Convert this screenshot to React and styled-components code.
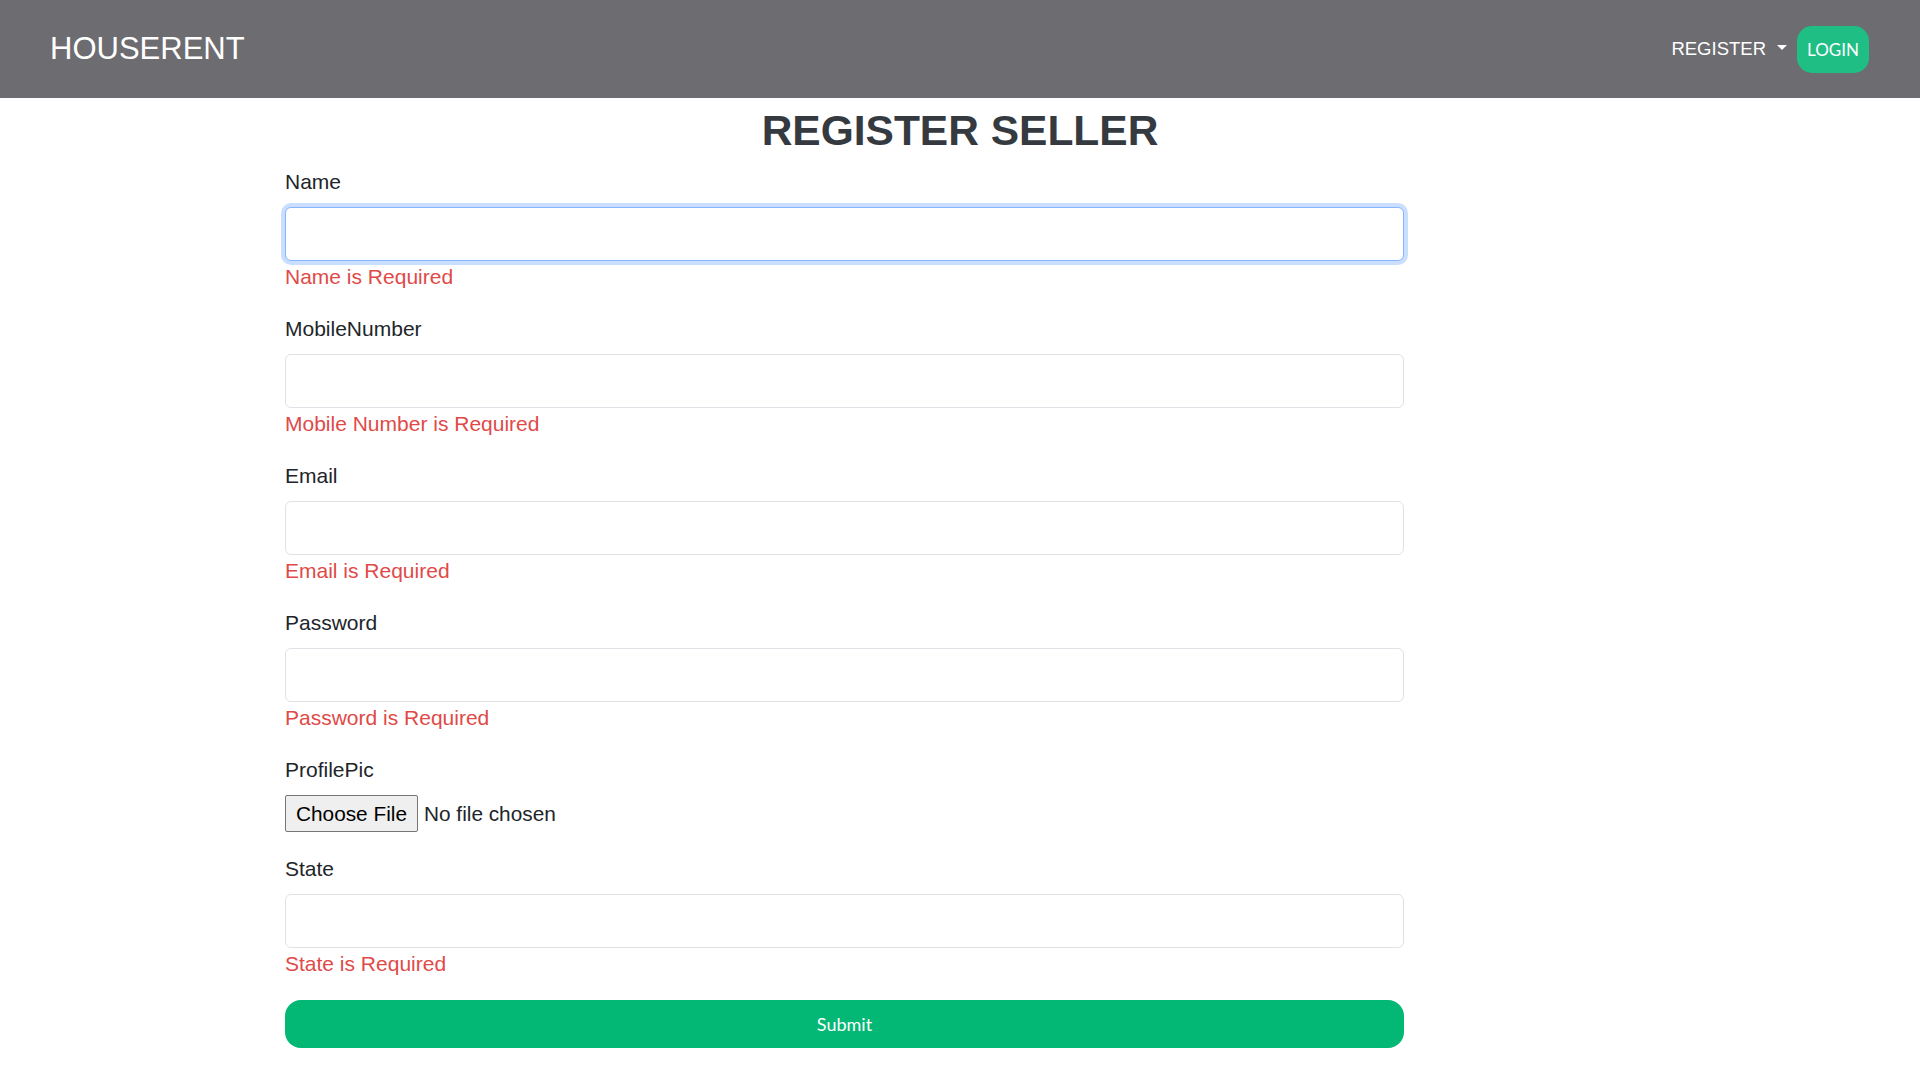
import styled, {createGlobalStyle} from "styled-components";

const GlobalStyle = createGlobalStyle`
  * {
    box-sizing: border-box;
  }
  body {
    margin: 0;
    background: #ffffff;
    font-family: "Liberation Sans", Arial, sans-serif;
    color: #212529;
  }
`

const colors = {
    nav: '#6d6c71',
    white: '#ffffff',
    dark: '#343a40',
    text: '#212529',
    red: '#df4a48',
    green: '#03b875',
    loginGreen: '#1ebe85',
    border: '#dee2e6',
}

const NavBar = styled.nav`
  height: 98px;
  background-color: ${colors.nav};
  display: flex;
  align-items: center;
  justify-content: space-between;
  padding: 0 51px 0 50px;
`
const Brand = styled.a`
  color: ${colors.white};
  font-size: 31px;
  line-height: 1;
  text-decoration: none;
  padding-bottom: 2px;
`
const NavRight = styled.div`
  display: flex;
  align-items: center;
  gap: 10px;
`
const DropdownToggle = styled.a`
  color: ${colors.white};
  font-size: 18.5px;
  display: flex;
  align-items: center;
  cursor: pointer;

  &::after {
    content: "";
    margin-left: 11px;
    border-top: 5px solid ${colors.white};
    border-left: 5px solid transparent;
    border-right: 5px solid transparent;
    margin-top: -3px;
  }
`
const LoginBtn = styled.button`
  width: 72px;
  height: 47px;
  border: none;
  border-radius: 15px;
  background-color: ${colors.loginGreen};
  color: ${colors.white};
  font-family: Lato, "Open Sans", sans-serif;
  font-size: 17px;
  cursor: pointer;
`

const Title = styled.h1`
  margin: 7px 0 10px;
  text-align: center;
  font-size: 42.5px;
  line-height: 1.2;
  font-weight: 700;
  color: ${colors.dark};
`

const Form = styled.form`
  width: 1119px;
  margin-left: 285px;
  display: flex;
  flex-direction: column;
  gap: 21px;
`
const Field = styled.div`
  display: flex;
  flex-direction: column;
`
const Label = styled.label`
  font-size: 21px;
  line-height: 31px;
  margin-bottom: 10px;
  color: ${colors.text};
`
const Input = styled.input`
  height: 54px;
  width: 100%;
  padding: 0 16px;
  font-size: 20px;
  font-family: inherit;
  border: 1px solid ${({$focused}) => $focused ? '#86b7fe' : colors.border};
  border-radius: 6px;
  outline: none;
  box-shadow: ${({$focused}) => $focused ? '0 0 0 4px rgba(13, 110, 253, 0.22)' : 'none'};
`
const Error = styled.div`
  font-size: 21px;
  line-height: 31px;
  color: ${colors.red};
`
const FileInput = styled.input`
  font-family: inherit;
  font-size: 20.8px;
  color: ${colors.text};
  height: 37px;

  &::file-selector-button {
    height: 37px;
    width: 133px;
    padding: 0;
    margin-right: 6px;
    font-family: inherit;
    font-size: 20.8px;
    color: #000000;
    background-color: #efefef;
    border: 1px solid #767676;
    border-radius: 2px;
  }
`
const SubmitBtn = styled.button`
  height: 48px;
  width: 100%;
  border: none;
  border-radius: 16px;
  background-color: ${colors.green};
  color: ${colors.white};
  font-family: Lato, "Open Sans", sans-serif;
  font-size: 18px;
  cursor: pointer;
`

const fields = [
    {label: 'Name', name: 'name', error: 'Name is Required', focused: true},
    {label: 'MobileNumber', name: 'mobile', error: 'Mobile Number is Required'},
    {label: 'Email', name: 'email', error: 'Email is Required'},
    {label: 'Password', name: 'password', error: 'Password is Required', type: 'password'},
]

const App = () => {
    return (
        <>
            <GlobalStyle/>
            <NavBar>
                <Brand>HOUSERENT</Brand>
                <NavRight>
                    <DropdownToggle>REGISTER</DropdownToggle>
                    <LoginBtn>LOGIN</LoginBtn>
                </NavRight>
            </NavBar>
            <Title>REGISTER SELLER</Title>
            <Form onSubmit={e => e.preventDefault()}>
                {fields.map(field => (
                    <Field key={field.name}>
                        <Label htmlFor={field.name}>{field.label}</Label>
                        <Input id={field.name} type={field.type || 'text'} $focused={field.focused}/>
                        <Error>{field.error}</Error>
                    </Field>
                ))}
                <Field>
                    <Label htmlFor="profilePic">ProfilePic</Label>
                    <FileInput id="profilePic" type="file"/>
                </Field>
                <Field>
                    <Label htmlFor="state">State</Label>
                    <Input id="state" type="text"/>
                    <Error>State is Required</Error>
                </Field>
                <SubmitBtn type="submit">Submit</SubmitBtn>
            </Form>
        </>
    )
}

export default App
